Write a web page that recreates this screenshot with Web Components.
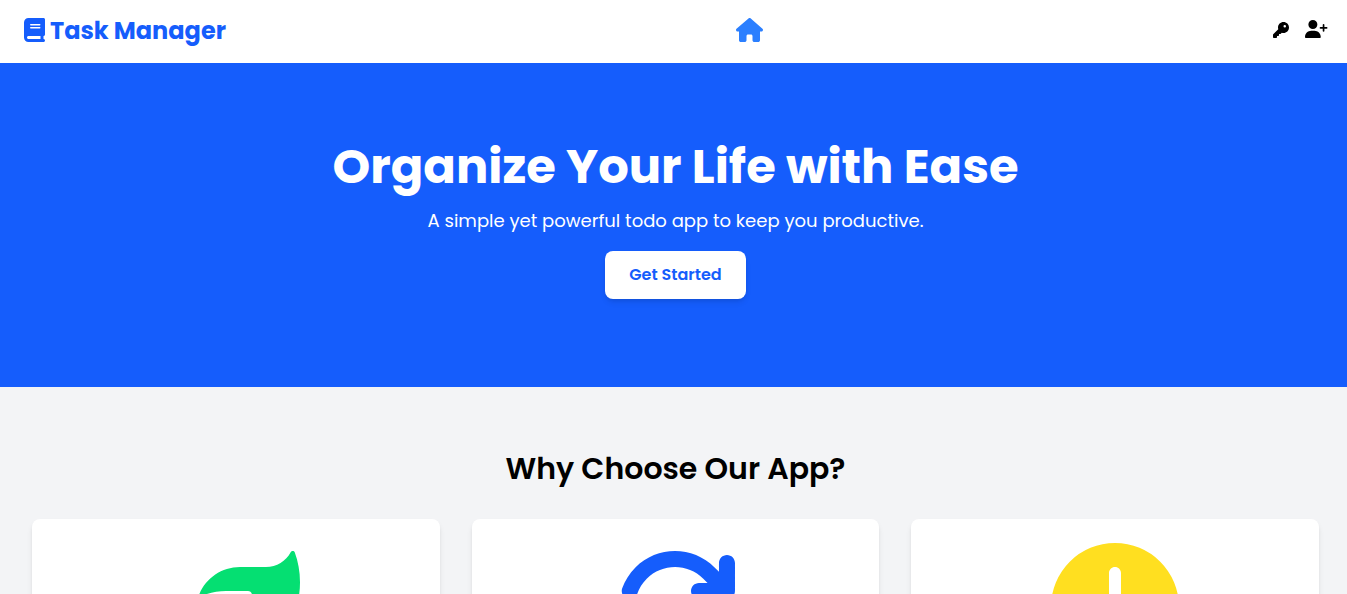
<!DOCTYPE html>
<html lang="en">
<head>
<meta charset="utf-8">
<meta name="viewport" content="width=device-width, initial-scale=1">
<title>Task Manager</title>
<style>
  html, body { margin: 0; height: 100%; }
  body {
    overflow: hidden;
    background: #f3f4f6;
    color: #000;
    font-family: Poppins, Inter, "Liberation Sans", sans-serif;
    --blue: #155dfc;
  }
</style>
</head>
<body>
<task-app></task-app>
<script>
  // Solid glyphs: [viewBox width, path]; every one is 512 units high.
  const ICONS = {
    book: [448, 'M96 0C43 0 0 43 0 96V416c0 53 43 96 96 96H384h32c17.7 0 32-14.3 32-32s-14.3-32-32-32V384c17.7 0 32-14.3 32-32V32c0-17.7-14.3-32-32-32H384 96zm0 384H352v64H96c-17.7 0-32-14.3-32-32s14.3-32 32-32zm32-240c0-8.8 7.2-16 16-16H336c8.8 0 16 7.2 16 16s-7.2 16-16 16H144c-8.8 0-16-7.2-16-16zm16 48H336c8.8 0 16 7.2 16 16s-7.2 16-16 16H144c-8.8 0-16-7.2-16-16s7.2-16 16-16z'],
    house: [576, 'M575.8 255.5c0 18-15 32.1-32 32.1h-32l.7 160.2c0 2.7-.2 5.4-.5 8.1V472c0 22.1-17.9 40-40 40H456c-1.1 0-2.2 0-3.3-.1c-1.4 .1-2.8 .1-4.2 .1H416 392c-22.1 0-40-17.9-40-40V448 384c0-17.7-14.3-32-32-32H256c-17.7 0-32 14.3-32 32v64 24c0 22.1-17.9 40-40 40H160 128.1c-1.5 0-3-.1-4.5-.2c-1.2 .1-2.4 .2-3.6 .2H104c-22.1 0-40-17.9-40-40V360c0-.9 0-1.9 .1-2.8V287.6H32c-18 0-32-14-32-32.1c0-9 3-17 10-24L266.4 8c7-7 15-8 22-8s15 2 21 7L564.8 231.5c8 7 12 15 11 24z'],
    key: [512, 'M336 352c97.2 0 176-78.8 176-176S433.2 0 336 0S160 78.8 160 176c0 18.7 2.9 36.8 8.3 53.7L7 391c-4.5 4.5-7 10.6-7 17v80c0 13.3 10.7 24 24 24h80c13.3 0 24-10.7 24-24V448h40c13.3 0 24-10.7 24-24V384h40c6.4 0 12.5-2.5 17-7l33.3-33.3c16.9 5.4 35 8.3 53.7 8.3zM376 96a40 40 0 1 1 0 80 40 40 0 1 1 0-80z'],
    'user-plus': [640, 'M96 128a128 128 0 1 1 256 0A128 128 0 1 1 96 128zM0 482.3C0 383.8 79.8 304 178.3 304h91.4C368.2 304 448 383.8 448 482.3c0 16.4-13.3 29.7-29.7 29.7H29.7C13.3 512 0 498.7 0 482.3zM504 312V248H440c-13.3 0-24-10.7-24-24s10.7-24 24-24h64V136c0-13.3 10.7-24 24-24s24 10.7 24 24v64h64c13.3 0 24 10.7 24 24s-10.7 24-24 24H552v64c0 13.3-10.7 24-24 24s-24-10.7-24-24z'],
    leaf: [512, 'M272 96c-78.6 0-145.1 51.5-167.7 122.5c33.6-17 71.5-26.5 111.7-26.5h88c8.8 0 16 7.2 16 16s-7.2 16-16 16H288 216s0 0 0 0c-16.6 0-32.7 1.9-48.3 5.4c-25.9 5.9-49.9 16.4-71.4 30.7c0 0 0 0 0 0C38.3 298.8 0 364.9 0 440v16c0 13.3 10.7 24 24 24s24-10.7 24-24V440c0-48.7 20.7-92.5 53.8-123.2C121.6 392.3 190.3 448 272 448l1 0c132.1-.7 239-130.9 239-291.4c0-42.6-7.5-83.1-21.1-119.6c-2.6-6.9-12.7-6.6-16.2-.1C455.9 72.1 418.7 96 376 96L272 96z'],
    sync: [512, 'M105.1 202.6c7.7-21.8 20.2-42.3 37.8-59.8c62.5-62.5 163.8-62.5 226.3 0L386.3 160H352c-17.7 0-32 14.3-32 32s14.3 32 32 32H463.5c0 0 0 0 0 0h.4c17.7 0 32-14.3 32-32V80c0-17.7-14.3-32-32-32s-32 14.3-32 32v35.2L414.4 97.6c-87.5-87.5-229.3-87.5-316.8 0C73.2 122 55.6 150.7 44.8 181.4c-5.9 16.7 2.9 34.9 19.5 40.8s34.9-2.9 40.8-19.5zM39 289.3c-5 1.5-9.8 4.2-13.7 8.2c-4 4-6.7 8.8-8.1 14c-.3 1.2-.6 2.5-.8 3.8c-.3 1.7-.4 3.4-.4 5.1V432c0 17.7 14.3 32 32 32s32-14.3 32-32V396.9l17.6 17.5 0 0c87.5 87.4 229.3 87.4 316.7 0c24.4-24.4 42.1-53.1 52.9-83.7c5.9-16.7-2.9-34.9-19.5-40.8s-34.9 2.9-40.8 19.5c-7.7 21.8-20.2 42.3-37.8 59.8c-62.5 62.5-163.8 62.5-226.3 0l-.1-.1L125.6 352H160c17.7 0 32-14.3 32-32s-14.3-32-32-32H48.4c-1.6 0-3.2 .1-4.8 .3s-3.1 .5-4.6 1z'],
    clock: [512, 'M256 0a256 256 0 1 1 0 512A256 256 0 1 1 256 0zM232 120V256c0 8 4 15.5 10.7 20l96 64c11 7.4 25.9 4.4 33.3-6.7s4.4-25.9-6.7-33.3L280 243.2V120c0-13.3-10.7-24-24-24s-24 10.7-24 24z']
  };

  const define = (name, render) => customElements.define(name, class extends HTMLElement {
    constructor() {
      super();
      this.attachShadow({ mode: 'open' });
    }
    connectedCallback() {
      this.shadowRoot.innerHTML = render(this);
    }
  });

  define('app-icon', el => {
    const [width, path] = ICONS[el.getAttribute('name')];
    return `
      <style>
        :host { display: block; height: var(--icon-size, 24px); }
        svg { display: block; height: 100%; width: auto; fill: currentColor; }
      </style>
      <svg viewBox="0 0 ${width} 512" aria-hidden="true"><path d="${path}"/></svg>`;
  });

  define('app-header', () => `
    <style>
      :host { display: block; background: #fff; }
      header {
        display: flex; align-items: center; justify-content: space-between;
        box-sizing: border-box; min-height: 63px; padding: 0 19px 3px 24px;
      }
      a { color: inherit; text-decoration: none; }
      .brand {
        display: flex; align-items: center; gap: 5px;
        color: var(--blue); font-size: 24px; line-height: 34px; font-weight: 700;
      }
      .brand span { padding-top: 2px; }
      .home { color: #2b7fff; }
      nav { display: flex; align-items: flex-end; gap: 16px; padding-bottom: 2px; }
      .key { --icon-size: 16px; }
      .join { --icon-size: 18px; }
    </style>
    <header>
      <a class="brand" href="#"><app-icon name="book"></app-icon><span>Task Manager</span></a>
      <a class="home" href="#" aria-label="Home"><app-icon name="house"></app-icon></a>
      <nav>
        <a class="key" href="#" aria-label="Log in"><app-icon name="key"></app-icon></a>
        <a class="join" href="#" aria-label="Sign up"><app-icon name="user-plus"></app-icon></a>
      </nav>
    </header>`);

  define('hero-banner', () => `
    <style>
      :host {
        display: flex; flex-direction: column; align-items: center; gap: 16px;
        padding: 80px 0 88px 4px; background: var(--blue); color: #fff; text-align: center;
      }
      ::slotted(h1) { margin: 0; font-size: 48px; line-height: 48px; font-weight: 700; }
      ::slotted(p) { margin: 0; font-size: 18px; line-height: 28px; }
      button {
        border: 0; border-radius: 8px; padding: 12px 24px; background: #fff; color: var(--blue);
        font: inherit; font-size: 16px; line-height: 24px; font-weight: 600;
        box-shadow: 0 4px 6px -1px rgb(0 0 0 / .1), 0 2px 4px -2px rgb(0 0 0 / .1);
      }
    </style>
    <slot></slot>
    <button type="button"><slot name="action"></slot></button>`);

  define('feature-card', () => `
    <style>
      :host {
        display: flex; justify-content: center; padding: 24px; background: #fff; border-radius: 8px;
        box-shadow: 0 4px 6px -1px rgb(0 0 0 / .1), 0 2px 4px -2px rgb(0 0 0 / .1);
        --icon-size: 128px;
      }
    </style>
    <slot></slot>`);

  define('feature-section', () => `
    <style>
      :host { display: block; padding: 64px 28px 64px 32px; }
      h2 { margin: 0 0 32px; text-align: center; font-size: 30px; line-height: 36px; font-weight: 600; }
      .grid { display: grid; grid-template-columns: repeat(3, 1fr); gap: 32px; }
      .green { color: #05df72; }
      .blue { color: var(--blue); }
      .yellow { color: #ffdf20; }
    </style>
    <h2>Why Choose Our App?</h2>
    <div class="grid">
      <feature-card class="green"><app-icon name="leaf"></app-icon></feature-card>
      <feature-card class="blue"><app-icon name="sync"></app-icon></feature-card>
      <feature-card class="yellow"><app-icon name="clock"></app-icon></feature-card>
    </div>`);

  define('task-app', () => `
    <style>:host { display: block; }</style>
    <app-header></app-header>
    <main>
      <hero-banner>
        <h1>Organize Your Life with Ease</h1>
        <p>A simple yet powerful todo app to keep you productive.</p>
        <span slot="action">Get Started</span>
      </hero-banner>
      <feature-section></feature-section>
    </main>`);
</script>
</body>
</html>
